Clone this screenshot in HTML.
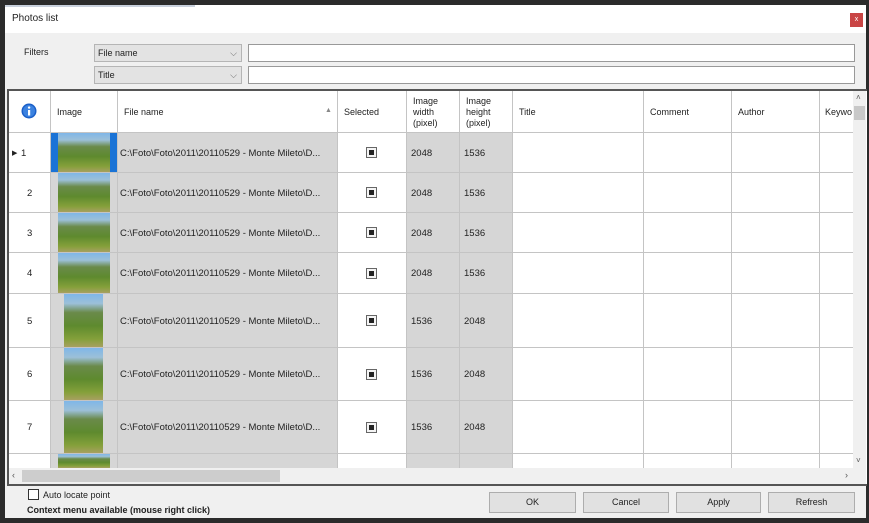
<!DOCTYPE html>
<html><head><meta charset="utf-8"><style>
*{box-sizing:border-box;margin:0;padding:0}
body{width:869px;height:523px;background:#2b2b2b;font-family:"Liberation Sans",sans-serif;font-size:9px;color:#222;position:relative;overflow:hidden}
.a{position:absolute}
.win{left:5px;top:5px;width:861px;height:513px;background:#f0f0f0}
.t{white-space:nowrap}
.c{position:absolute}
.g{background:#d6d6d6}
.w{background:#fff}
.btn{position:absolute;top:492px;height:21px;background:#e1e1e1;border:1px solid #adadad;text-align:center;line-height:19px;font-size:9px}
.chk{position:absolute;width:11px;height:11px;border:1px solid #666;background:#f4f4f4}
.chk:after{content:"";position:absolute;left:2px;top:2px;width:5px;height:5px;background:#222}
.cell{display:flex;align-items:center;padding-left:4px;font-size:9.5px;white-space:nowrap}
.vl{position:absolute;width:1px;background:#c4c4c4}
.hl{position:absolute;height:1px;background:#c4c4c4}
</style></head><body>
<div class="a win"></div>
<div class="a" style="left:5px;top:5px;width:861px;height:28px;background:#fff"></div>
<div class="a" style="left:5px;top:5px;width:190px;height:2px;background:#c8d0dc"></div>
<div class="a t" style="left:12px;top:13px;font-size:10px">Photos list</div>
<div class="a" style="left:850px;top:13px;width:13px;height:14px;background:#c94545;color:#fff;font-size:7px;text-align:center;line-height:14px">x</div>
<div class="a t" style="left:24px;top:47px">Filters</div>
<div class="a" style="left:94px;top:44px;width:148px;height:18px;background:#e3e3e3;border:1px solid #b5b5b5;padding-left:3px;line-height:16px">File name<span style="position:absolute;right:4px;color:#666">⌵</span></div>
<div class="a" style="left:94px;top:66px;width:148px;height:18px;background:#e3e3e3;border:1px solid #b5b5b5;padding-left:3px;line-height:16px">Title<span style="position:absolute;right:4px;color:#666">⌵</span></div>
<div class="a" style="left:248px;top:44px;width:607px;height:18px;background:#fff;border:1px solid #999"></div>
<div class="a" style="left:248px;top:66px;width:607px;height:18px;background:#fff;border:1px solid #999"></div>
<div class="a" style="left:7px;top:89px;width:860px;height:397px;background:#fff;border:2px solid #555;border-right:none"></div>
<div class="a" style="left:9px;top:91px;width:844px;height:42px;background:#fff"></div>
<div id="grid"></div>
<svg class="a" style="left:21px;top:103px" width="16" height="16"><circle cx="8" cy="8" r="7.5" fill="#1a5fc8"/><circle cx="8" cy="8" r="6" fill="#3b82e0"/><rect x="7" y="7" width="2.2" height="5.5" fill="#fff"/><circle cx="8.1" cy="4.6" r="1.2" fill="#fff"/></svg>
<div class="a t" style="left:57px;top:107px">Image</div>
<div class="a t" style="left:124px;top:107px">File name</div>
<div class="a t" style="left:325px;top:107px;color:#888;font-size:7px">▲</div>
<div class="a t" style="left:344px;top:107px">Selected</div>
<div class="a" style="left:413px;top:96px;line-height:11px">Image<br>width<br>(pixel)</div>
<div class="a" style="left:466px;top:96px;line-height:11px">Image<br>height<br>(pixel)</div>
<div class="a t" style="left:519px;top:107px">Title</div>
<div class="a t" style="left:650px;top:107px">Comment</div>
<div class="a t" style="left:738px;top:107px">Author</div>
<div class="a t" style="left:825px;top:107px">Keywo</div>
<div class="a" style="left:853px;top:91px;width:13px;height:377px;background:#f0f0f0"></div>
<div class="a" style="left:854px;top:106px;width:11px;height:14px;background:#c8c8c8"></div>
<div class="a t" style="left:856px;top:93px;font-size:8px;color:#555">˄</div>
<div class="a t" style="left:856px;top:456px;font-size:8px;color:#555">˅</div>
<div class="a" style="left:9px;top:468px;width:857px;height:16px;background:#f0f0f0"></div>
<div class="a" style="left:22px;top:470px;width:258px;height:12px;background:#cdcdcd"></div>
<div class="a t" style="left:12px;top:470px;color:#555">‹</div>
<div class="a t" style="left:845px;top:470px;color:#555">›</div>
<div class="a" style="left:28px;top:489px;width:11px;height:11px;background:#fff;border:1px solid #333"></div>
<div class="a t" style="left:43px;top:490px">Auto locate point</div>
<div class="a t" style="left:27px;top:505px;font-weight:bold">Context menu available (mouse right click)</div>
<div class="btn" style="left:489px;width:87px">OK</div>
<div class="btn" style="left:583px;width:86px">Cancel</div>
<div class="btn" style="left:676px;width:85px">Apply</div>
<div class="btn" style="left:768px;width:87px">Refresh</div>
<script>
var rows=[[133,40,0],[173,40,0],[213,40,0],[253,41,0],[294,54,1],[348,53,1],[401,53,1],[454,14,2]];
var h='';
rows.forEach(function(r,i){
var y=r[0],hh=r[1],p=r[2];
var wv=p==1?'1536':'2048',hv=p==1?'2048':'1536';
h+='<div class="c w cell" style="left:9px;top:'+y+'px;width:41px;height:'+hh+'px;padding-left:'+(i==0?'12':'18')+'px">'+(i==0?'<span style="font-size:7px;position:absolute;left:3px">▶</span>':'')+(p==2?'':(i+1))+'</div>';
h+='<div class="c g" style="left:51px;top:'+y+'px;width:66px;height:'+hh+'px"></div>';
h+='<div class="c g cell" style="left:118px;top:'+y+'px;width:219px;height:'+hh+'px;padding-left:2px">'+(p==2?'':'C:\\Foto\\Foto\\2011\\20110529 - Monte Mileto\\D...')+'</div>';
if(p!=2)h+='<div class="chk" style="left:366px;top:'+(y+hh/2-6)+'px"></div>';
h+='<div class="c g cell" style="left:407px;top:'+y+'px;width:52px;height:'+hh+'px">'+(p==2?'':wv)+'</div>';
h+='<div class="c g cell" style="left:460px;top:'+y+'px;width:52px;height:'+hh+'px">'+(p==2?'':hv)+'</div>';
if(i==0)h+='<div class="a" style="left:51px;top:133px;width:66px;height:39px;background:#1a73d6"></div>';
var tx=p==1?64:58,tw=p==1?39:52;
var th=p==2?14:hh-1;
h+='<div class="a" style="left:'+tx+'px;top:'+y+'px;width:'+tw+'px;height:'+th+'px;background:linear-gradient(#7fb6e8 0%,#9cc0d8 18%,#6a8a4a 35%,#5e8a2e 60%,#84a03a 85%,#a7a060 100%)"></div>';
h+='<div class="hl" style="left:9px;top:'+(y-1)+'px;width:844px"></div>';
});
[50,117,337,406,459,512,643,731,819].forEach(function(x){h+='<div class="vl" style="left:'+x+'px;top:91px;height:377px"></div>';});
document.getElementById('grid').innerHTML=h;
</script>
</body></html>
